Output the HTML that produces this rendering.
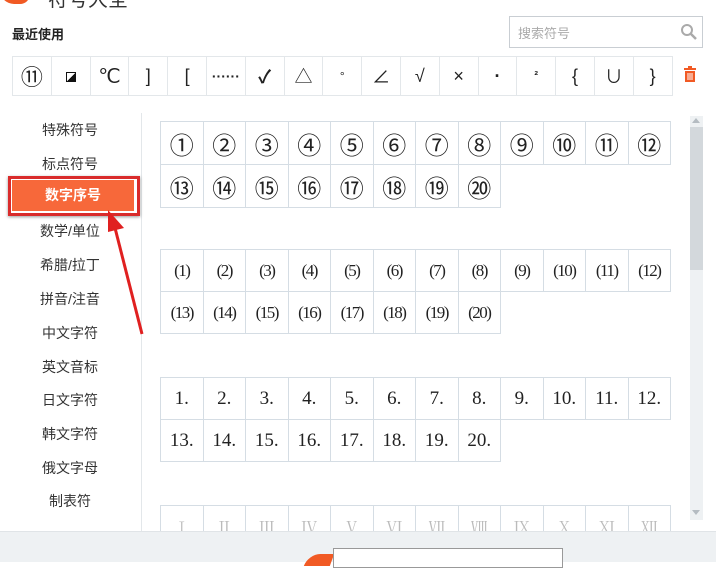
<!DOCTYPE html>
<html><head><meta charset="utf-8"><style>
*{margin:0;padding:0;box-sizing:border-box}
body{width:716px;height:562px;overflow:hidden;background:#fff;font-family:"Liberation Sans","Noto Sans CJK SC",sans-serif;position:relative;color:#333}
.a{position:absolute}
.g{position:absolute;left:160px;border-collapse:collapse}
.g td{border:1px solid #d5dde4;width:42.5px;text-align:center;font-family:"Liberation Serif","Noto Serif CJK SC",serif;color:#222;padding:0}
.g td.e{border:none}
.c td{font-size:24px;height:43px;font-family:"Liberation Sans","Noto Sans CJK SC",sans-serif}
.p td{font-size:17px;height:42px;letter-spacing:-1.5px}
.d td{font-size:19px;height:42px}
.r{position:absolute;left:12px;top:56px;border-collapse:collapse}
.r td{border:1px solid #e3e7ea;width:38.8px;height:39px;text-align:center;font-size:18px;color:#222;font-family:"Liberation Sans","Noto Sans CJK SC",sans-serif}
.side div{position:absolute;left:0;width:140px;text-align:center;font-size:14px;color:#333}
</style></head><body>
<div class="a" style="left:0;top:-12px;width:30px;height:16px;background:#f15a24;border-radius:0 0 10px 14px"></div>
<div class="a" style="left:48px;top:-17px;font-size:20px;color:#333">符号大全</div>
<div class="a" style="left:12px;top:24px;font-size:13px;font-weight:bold;color:#222">最近使用</div>
<div class="a" style="left:509px;top:16px;width:194px;height:32px;border:1px solid #c9ced3;background:#fff"></div>
<div class="a" style="left:518px;top:23px;font-size:13px;color:#aaa">搜索符号</div>
<svg class="a" style="left:680px;top:23px" width="18" height="18"><circle cx="7" cy="7" r="5" fill="none" stroke="#aaa" stroke-width="2"/><path d="M11 11l5 5" stroke="#aaa" stroke-width="2.5"/></svg>
<table class="r"><tr><td style="font-size:22px">⑪</td><td><span style="display:inline-block;width:10px;height:10px;background:linear-gradient(135deg,#fff 50%,#111 50%);border:1px solid #111"></span></td><td style="font-family:'Liberation Serif',serif;font-size:20px">℃</td><td>]</td><td>[</td><td style="font-size:14px;font-weight:bold">······</td><td style="font-weight:bold">✓</td><td>△</td><td style="font-size:12px">°</td><td>∠</td><td>√</td><td>×</td><td style="font-weight:bold">·</td><td style="font-size:11px;font-weight:bold">²</td><td>{</td><td>∪</td><td>}</td></tr></table>
<svg class="a" style="left:683px;top:66px" width="14" height="17"><rect x="1" y="2" width="12" height="2" fill="#f15a24"/><rect x="5" y="0" width="4" height="2" fill="#f15a24"/><rect x="2" y="5" width="10" height="11" fill="#f15a24"/><path d="M5 7v7M7 7v7M9 7v7" stroke="#fff"/></svg>

<div class="a" style="left:141px;top:113px;width:1px;height:418px;background:#e3e7ea"></div>
<div class="side">
<div style="top:120px">特殊符号</div>
<div style="top:154px">标点符号</div>
<div style="top:221px">数学/单位</div>
<div style="top:255px">希腊/拉丁</div>
<div style="top:289px">拼音/注音</div>
<div style="top:323px">中文字符</div>
<div style="top:357px">英文音标</div>
<div style="top:390px">日文字符</div>
<div style="top:424px">韩文字符</div>
<div style="top:458px">俄文字母</div>
<div style="top:491px">制表符</div>
</div>
<div class="a" style="left:8px;top:176px;width:132px;height:40px;border:3px solid #d92b2b;box-shadow:0 1px 3px rgba(0,0,0,.4)"></div>
<div class="a" style="left:12px;top:180px;width:122px;height:31px;background:#f7683a;color:#fff;font-size:14px;font-weight:bold;text-align:center;line-height:31px">数字序号</div>
<svg class="a" style="left:100px;top:200px" width="50" height="140"><path d="M42 134L14 24" stroke="#e02020" stroke-width="3"/><path d="M8 10L24 28L8 32Z" fill="#e02020"/></svg>

<table class="g c" style="top:121px"><tr><td>①</td><td>②</td><td>③</td><td>④</td><td>⑤</td><td>⑥</td><td>⑦</td><td>⑧</td><td>⑨</td><td>⑩</td><td>⑪</td><td>⑫</td></tr><tr><td>⑬</td><td>⑭</td><td>⑮</td><td>⑯</td><td>⑰</td><td>⑱</td><td>⑲</td><td>⑳</td><td class="e"></td><td class="e"></td><td class="e"></td><td class="e"></td></tr></table>
<table class="g p" style="top:249px"><tr><td>(1)</td><td>(2)</td><td>(3)</td><td>(4)</td><td>(5)</td><td>(6)</td><td>(7)</td><td>(8)</td><td>(9)</td><td>(10)</td><td>(11)</td><td>(12)</td></tr><tr><td>(13)</td><td>(14)</td><td>(15)</td><td>(16)</td><td>(17)</td><td>(18)</td><td>(19)</td><td>(20)</td><td class="e"></td><td class="e"></td><td class="e"></td><td class="e"></td></tr></table>
<table class="g d" style="top:377px"><tr><td>1.</td><td>2.</td><td>3.</td><td>4.</td><td>5.</td><td>6.</td><td>7.</td><td>8.</td><td>9.</td><td>10.</td><td>11.</td><td>12.</td></tr><tr><td>13.</td><td>14.</td><td>15.</td><td>16.</td><td>17.</td><td>18.</td><td>19.</td><td>20.</td><td class="e"></td><td class="e"></td><td class="e"></td><td class="e"></td></tr></table>
<div class="a" style="left:160px;top:505px;width:511px;height:26px;overflow:hidden"><table class="g" style="left:0;top:0"><tr><td style="height:42px;color:#bbb;font-size:14px">Ⅰ</td><td style="color:#bbb">Ⅱ</td><td style="color:#bbb">Ⅲ</td><td style="color:#bbb">Ⅳ</td><td style="color:#bbb">Ⅴ</td><td style="color:#bbb">Ⅵ</td><td style="color:#bbb">Ⅶ</td><td style="color:#bbb">Ⅷ</td><td style="color:#bbb">Ⅸ</td><td style="color:#bbb">Ⅹ</td><td style="color:#bbb">Ⅺ</td><td style="color:#bbb">Ⅻ</td></tr></table></div>

<div class="a" style="left:690px;top:116px;width:13px;height:404px;background:#eef1f3"></div>
<div class="a" style="left:690px;top:127px;width:13px;height:143px;background:#d3d8dc"></div>
<div class="a" style="left:692px;top:118px;width:0;height:0;border:4px solid transparent;border-bottom:5px solid #b5bcc2;border-top:0"></div>
<div class="a" style="left:692px;top:510px;width:0;height:0;border:4px solid transparent;border-top:5px solid #b5bcc2;border-bottom:0"></div>

<div class="a" style="left:0;top:531px;width:716px;height:31px;background:#eef1f3;border-top:1px solid #e0e4e7"></div>
<div class="a" style="left:306px;top:554px;width:26px;height:12px;background:#f15a24;border-radius:12px 0 0 0;transform:skewX(-20deg)"></div>
<div class="a" style="left:333px;top:548px;width:230px;height:20px;border:1px solid #999;background:#fff"></div>
</body></html>
